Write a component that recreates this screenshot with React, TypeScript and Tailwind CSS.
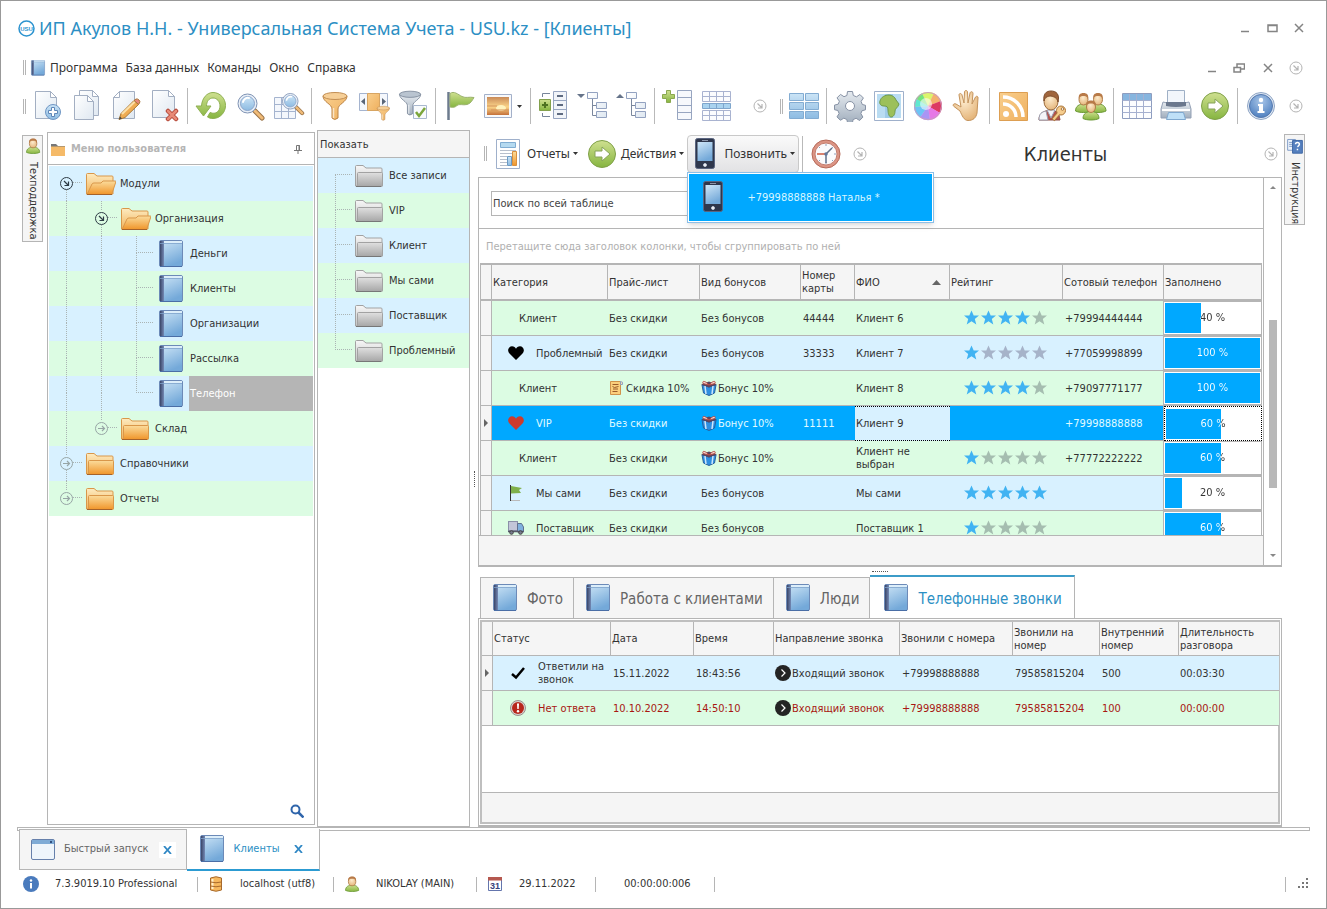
import React from 'react';

type IconProps = { size?: number };

/* Gradients shared by all icons */
const IconDefs: React.FC = () => (
    <svg width="0" height="0" className="absolute" aria-hidden="true">
        <defs>
            <linearGradient id="gPage" x1="0" y1="0" x2="1" y2="1">
                <stop offset="0" stopColor="#ffffff" />
                <stop offset="1" stopColor="#dfe8f1" />
            </linearGradient>
            <linearGradient id="gBook" x1="0" y1="0" x2="0.4" y2="1">
                <stop offset="0" stopColor="#cfe6f7" />
                <stop offset="1" stopColor="#74a9d9" />
            </linearGradient>
            <linearGradient id="gSpine" x1="0" y1="0" x2="1" y2="0">
                <stop offset="0" stopColor="#3a4568" />
                <stop offset="1" stopColor="#7489b4" />
            </linearGradient>
            <linearGradient id="gGreen" x1="0" y1="0" x2="0" y2="1">
                <stop offset="0" stopColor="#cfe090" />
                <stop offset="1" stopColor="#86b540" />
            </linearGradient>
            <linearGradient id="gOrange" x1="0" y1="0" x2="0" y2="1">
                <stop offset="0" stopColor="#fbdc9c" />
                <stop offset="1" stopColor="#f0952a" />
            </linearGradient>
            <linearGradient id="gAmber" x1="0" y1="0" x2="1" y2="1">
                <stop offset="0" stopColor="#f9cf8e" />
                <stop offset="1" stopColor="#efb05e" />
            </linearGradient>
            <linearGradient id="gOrangeBack" x1="0" y1="0" x2="0" y2="1">
                <stop offset="0" stopColor="#fdebc0" />
                <stop offset="1" stopColor="#f2b45c" />
            </linearGradient>
            <linearGradient id="gGray" x1="0" y1="0" x2="0" y2="1">
                <stop offset="0" stopColor="#e0e0e0" />
                <stop offset="1" stopColor="#a6a6a6" />
            </linearGradient>
            <linearGradient id="gGrayBack" x1="0" y1="0" x2="0" y2="1">
                <stop offset="0" stopColor="#f7f7f7" />
                <stop offset="1" stopColor="#c4c4c4" />
            </linearGradient>
            <linearGradient id="gBlue" x1="0" y1="0" x2="0" y2="1">
                <stop offset="0" stopColor="#cbe4f6" />
                <stop offset="1" stopColor="#8dbbe2" />
            </linearGradient>
            <linearGradient id="gSteel" x1="0" y1="0" x2="0" y2="1">
                <stop offset="0" stopColor="#e6ebf0" />
                <stop offset="1" stopColor="#a1aebd" />
            </linearGradient>
            <linearGradient id="gSunset" x1="0" y1="0" x2="0" y2="1">
                <stop offset="0" stopColor="#c98a58" />
                <stop offset="0.55" stopColor="#fbd489" />
                <stop offset="1" stopColor="#c4713a" />
            </linearGradient>
            <radialGradient id="gSkin" cx="0.45" cy="0.35" r="0.7">
                <stop offset="0" stopColor="#fdebcd" />
                <stop offset="1" stopColor="#e3b276" />
            </radialGradient>
            <radialGradient id="gBall" cx="0.5" cy="0.3" r="0.7">
                <stop offset="0" stopColor="#a9c6e8" />
                <stop offset="1" stopColor="#4f80c0" />
            </radialGradient>
        </defs>
    </svg>
);

const Svg: React.FC<{ size?: number; children: React.ReactNode }> = ({ size = 32, children }) => (
    <svg width={size} height={size} viewBox="0 0 32 32" fill="none" className="shrink-0" aria-hidden="true">
        {children}
    </svg>
);

const pageStroke = '#a3afc2';

const Magnifier = () => (
    <>
        <path d="M19 19l8 8" stroke="#9a7348" strokeWidth="5" strokeLinecap="round" />
        <path d="M20 20l7 7" stroke="#f0bb78" strokeWidth="3" strokeLinecap="round" />
        <circle cx="12.500" cy="12.500" r="9.500" fill="#e8eef6" stroke="#7f93b4" />
        <circle cx="12.500" cy="12.500" r="7" fill="url(#gBlue)" stroke="#8ba6cc" />
        <path d="M8 11a5 5 0 0 1 6-4" stroke="#fff" strokeWidth="2" strokeLinecap="round" />
    </>
);

const NewDocIcon = () => (
    <Svg>
        <path d="M3.500 1.500h15l6 6v21h-21z" fill="url(#gPage)" stroke={pageStroke} />
        <path d="M18.500 1.500v6h6z" fill="#fff" stroke={pageStroke} />
        <circle cx="21" cy="22" r="7.500" fill="url(#gBlue)" stroke="#6f96c4" />
        <path d="M19.500 17.500h3v3h3v3h-3v3h-3v-3h-3v-3h3z" fill="#fff" stroke="#5f87b8" />
    </Svg>
);

const CopyIcon = () => (
    <Svg>
        <path d="M8.500.500h13l6 6v19h-19z" fill="url(#gPage)" stroke={pageStroke} />
        <path d="M21.500.500v6h6z" fill="#fff" stroke={pageStroke} />
        <path d="M3.500 5.500h13l6 6v18h-19z" fill="url(#gPage)" stroke={pageStroke} />
        <path d="M16.500 5.500v6h6z" fill="#fff" stroke={pageStroke} />
    </Svg>
);

const EditIcon = () => (
    <Svg>
        <path d="M9.500 1.500h15v27h-21v-21z" fill="url(#gPage)" stroke={pageStroke} />
        <path d="M9.500 1.500v6h-6z" fill="#fff" stroke={pageStroke} />
        <path d="M9 29.500l2-6L24 10.500l4.500 4L15 27.500z" fill="#efac53" stroke="#a87836" />
        <path d="M12 24L25 11.500" stroke="#fce0a8" strokeWidth="2" />
        <path d="M24 10.500l2-1.500q1.500-.500 3 1t.500 3l-1 1.500z" fill="#e8877c" stroke="#a87836" />
        <path d="M9 29.500l1-3 2 2z" fill="#444" />
    </Svg>
);

const DeleteDocIcon = () => (
    <Svg>
        <path d="M3.500.500h16l6 6v21h-22z" fill="url(#gPage)" stroke={pageStroke} />
        <path d="M19.500.500v6h6z" fill="#fff" stroke={pageStroke} />
        <path d="M19 21l8 8M27 21l-8 8" stroke="#b5493a" strokeWidth="4.500" strokeLinecap="round" />
        <path d="M19 21l8 8M27 21l-8 8" stroke="#e88a77" strokeWidth="2.500" strokeLinecap="round" />
    </Svg>
);

const RefreshIcon = () => (
    <Svg>
        <path
            d="M1 16h5.500C7 8 12 2.500 18 2.500c7 0 12.500 6 12.500 13S25 28.500 18 28.500c-2 0-4-.500-5.500-1.500l2.500-4.500c6 2.500 10-1.500 10-6.500 0-4.500-3-8-7-8-4 0-6.500 3.500-6.500 8H16L8.500 26z"
            fill="url(#gGreen)"
            stroke="#8fb052"
        />
    </Svg>
);

const SearchIcon = () => <Svg><g transform="translate(1 1)"><Magnifier /></g></Svg>;

const TableSearchIcon = () => (
    <Svg>
        <path d="M1.500 7.500h21v21h-21zM1.500 14.500h21M1.500 21.500h21M8.500 7.500v21M15.500 7.500v21" fill="#f4f7fc" stroke="#a5b4cf" />
        <g transform="translate(7 1) scale(.82)"><Magnifier /></g>
    </Svg>
);

const Funnel: React.FC<{ steel?: boolean }> = ({ steel }) => (
    <>
        <path
            d="M4 6c0 6 9 8 9 13v9q2.500 3 6 0v-9c0-5 9-7 9-13z"
            fill={steel ? 'url(#gSteel)' : 'url(#gAmber)'}
            stroke={steel ? '#7e8b9c' : '#bb8347'}
        />
        <ellipse cx="16" cy="6" rx="12" ry="3.500" fill={steel ? '#b9c4d0' : '#f6cf97'} stroke={steel ? '#7e8b9c' : '#c28e54'} />
        <path d="M14.500 18v10" stroke="#fff" strokeOpacity=".6" strokeWidth="1.500" />
    </>
);

const FunnelIcon = () => <Svg><Funnel /></Svg>;

const ColumnFilterIcon = () => (
    <Svg>
        <path d="M1.500 3.500h28v17h-28z" fill="#f4f7fc" stroke="#a5b4cf" />
        <path d="M9.500 3.500h12v17h-12z" fill="url(#gAmber)" stroke="#d8a562" />
        <path d="M7 8v7l-4-3.500zM24 8v7l4-3.500z" fill="#5a6678" />
        <g transform="translate(17 15) scale(.52)"><Funnel /></g>
    </Svg>
);

const FunnelCheckIcon = () => (
    <Svg>
        <g transform="translate(-1 -1) scale(.88)"><Funnel steel /></g>
        <path d="M16.500 15.500h13v13h-13z" fill="#f8fafc" stroke="#a9b8cf" />
        <path d="M19 22l3 4 6-8" stroke="#7ba63c" strokeWidth="2.500" />
    </Svg>
);

const FlagIcon = () => (
    <Svg>
        <path d="M5.500 2v28" stroke="#6d7b8e" strokeWidth="2.500" />
        <path d="M7 3.500c4-3 8 1 12 3s7 0 12 1c-2 3-3 6-7 7s-8-1-10 1-4 2-7 1.500z" fill="url(#gGreen)" stroke="#9cb36e" />
    </Svg>
);

const PictureIcon = () => (
    <Svg>
        <path d="M2.500 4.500h27v23h-27z" fill="#f7f9fc" stroke="#a3b0c9" />
        <path d="M5 7h22v18H5z" fill="url(#gSunset)" />
        <ellipse cx="19" cy="18" rx="5" ry="3" fill="#fff2bd" />
        <path d="M5 16h10M9 20h18" stroke="#d3935a" />
    </Svg>
);

const ExpandGroupIcon = () => (
    <Svg>
        <path d="M4.500 7V3.500H12M4.500 23v3.500H12" stroke="#77859a" />
        <path d="M1.500 9.500h11v11h-11z" fill="url(#gGreen)" stroke="#83a14c" />
        <path d="M4 15h6M7 12v6" stroke="#4e7221" strokeWidth="2" />
        <path d="M15.500 1.500h13v27h-13zM15.500 10.500h13M15.500 19.500h13" fill="#f1f4f9" stroke="#97a5c0" />
        <path d="M19 6h6M19 15h6M19 24h6" stroke="#5d6a80" strokeWidth="2" />
    </Svg>
);

const TreeIcon: React.FC<{ up?: boolean }> = ({ up }) => (
    <Svg>
        <path d={up ? 'M0 8h8L4 4z' : 'M0 4h8L4 8z'} fill="#66748a" />
        <path d="M15.500 9v16.500h4M15.500 15.500h4" stroke="#7a879d" />
        <path d="M10.500 2.500h10v6h-10zM19.500 12.500h10v6h-10zM19.500 21.500h10v6h-10z" fill="url(#gPage)" stroke="#93a2c0" />
    </Svg>
);

const AddColumnIcon = () => (
    <Svg>
        <path d="M4.500.500h4v4h4v4h-4v4h-4v-4h-4v-4h4z" fill="url(#gGreen)" stroke="#8aa850" />
        <path d="M15.500.500h14v29h-14zM15.500 7.500h14M15.500 15.500h14M15.500 22.500h14" fill="#f6f8fc" stroke="#97a5c0" />
    </Svg>
);

const RowsIcon = () => (
    <Svg>
        <path d="M1.500 1.500h28v10h-28zM1.500 6.500h28M8.500 1.500v10M15.500 1.500v10M22.500 1.500v10" fill="#fbfcfe" stroke="#a9b3d0" />
        <path d="M1.500 20.500h28v10h-28zM1.500 25.500h28M8.500 20.500v10M15.500 20.500v10M22.500 20.500v10" fill="#fbfcfe" stroke="#a9b3d0" />
        <path d="M1.500 13.500h28v5h-28zM8.500 13.500v5M15.500 13.500v5M22.500 13.500v5" fill="#a9d3ef" stroke="#7fa6cc" />
    </Svg>
);

const TilesIcon = () => (
    <Svg>
        <path
            d="M1.500 3.500h14v7h-14zM17.500 3.500h13v7h-13zM1.500 12.500h14v7h-14zM17.500 12.500h13v7h-13zM1.500 21.500h14v7h-14zM17.500 21.500h13v7h-13z"
            fill="url(#gBlue)"
            stroke="#83acd2"
        />
    </Svg>
);

const GearIcon = () => (
    <Svg>
        <path
            d="M13.500 1.500h5l.8 4 3.200 1.300 3.400-2.300 3.500 3.500-2.300 3.400 1.200 3.100 3.200.8v4.500l-3.600 1-1 2.800 2 3.500-3.300 3.400-3.500-2.200-3 1.300-.8 3.700h-4.600l-.9-3.800-3-1.300-3.400 2.100L3 26.900l2.100-3.400-1.200-3-3.400-.8v-4.600l3.700-.9 1.200-3L3 7.900l3.500-3.500 3.500 2.300 2.900-1.200z"
            fill="url(#gSteel)"
            stroke="#8792a5"
            strokeLinejoin="round"
        />
        <circle cx="16" cy="16" r="4.500" fill="#fff" stroke="#8792a5" />
    </Svg>
);

const MapIcon = () => (
    <Svg>
        <path d="M1.500 1.500h29v29h-29z" fill="#fff" stroke="#9fb0cb" />
        <path d="M4 4h24v24H4z" fill="#b9dcf2" />
        <path d="M12 4h8v24h-8z" fill="#9fcbe8" />
        <path d="M7 11c1-4 5-6 9-6 3 0 6 2 7 5l3 4c-1 4-4 4-4 7 0 4-2 6-4 6s-3-4-3-7-1-4-4-4-5-2-4-5z" fill="#9cc05a" stroke="#6f9a4d" />
    </Svg>
);

const ColorWheelIcon = () => (
    <Svg>
        <circle cx="16" cy="16" r="14" fill="#f7a8dd" />
        <path d="M16 16L10 3.300A14 14 0 0 1 22 3.300z" fill="#dcf56d" />
        <path d="M16 16L22 3.300A14 14 0 0 1 29 11z" fill="#f4b26e" />
        <path d="M16 16L29 11A14 14 0 0 1 28 23z" fill="#dc3a62" />
        <path d="M16 16L28 23A14 14 0 0 1 18 30z" fill="#e678e6" />
        <path d="M16 16L18 30A14 14 0 0 1 8 27.500z" fill="#a995f4" />
        <path d="M16 16L8 27.500A14 14 0 0 1 2 17z" fill="#6cc4f6" />
        <path d="M16 16L2 17A14 14 0 0 1 4 8.500z" fill="#5fe8d0" />
        <path d="M16 16L4 8.500A14 14 0 0 1 10 3.300z" fill="#73e67d" />
        <circle cx="14" cy="14" r="6" fill="#fff" fillOpacity=".55" />
        <circle cx="16" cy="16" r="13.500" stroke="#c9a0c0" />
    </Svg>
);

const HandIcon = () => (
    <Svg>
        <path
            d="M9 21L3 16.500c-2-1.500 0-3.500 2-2.500l5 3L8 5c0-2 2.500-2 3 0l2 8 .5-11c0-2 3-2 3 0l.5 11 2-10c.5-2 3-1.500 3 .500L21 14l3.500-7c1-1.500 3-.500 2.500 1l-1 15c-1 5-4 7.500-9 7.500-4 0-6-5-8-9.500z"
            fill="url(#gSkin)"
            stroke="#c4935c"
        />
    </Svg>
);

const RssIcon = () => (
    <Svg>
        <path d="M2.500 2.500h28v28h-28z" fill="url(#gAmber)" stroke="#dd9f52" />
        <circle cx="9" cy="24" r="3" fill="#fff" />
        <path d="M6 14a13 13 0 0 1 13 13M6 7a20 20 0 0 1 20 20" stroke="#fff" strokeWidth="3.500" />
    </Svg>
);

const UserKeyIcon = () => (
    <Svg>
        <path d="M3 30c0-7 4-9 12-10 6 1 8 3 9 10z" fill="#b3504a" stroke="#8c4b42" />
        <path d="M3 30c0-7 3-8 7-9l2 9zM11 20l4 8 4-8z" fill="#f4f4f8" stroke="#9b9fb0" />
        <ellipse cx="15" cy="11.500" rx="7" ry="8.500" fill="url(#gSkin)" stroke="#9b6b3d" />
        <path d="M8 11c-1-7 2-10 7-10s9 3 7 11c-1-4-3-5-7-6-3 0-6 1-7 5z" fill="#a0653c" stroke="#7d4d2c" />
        <path d="M17 30l6-7" stroke="#a9743b" strokeWidth="4" />
        <circle cx="25" cy="20.500" r="4.500" fill="#f6cd8d" stroke="#a9743b" />
        <path d="M17.500 29.500l6-7" stroke="#f6cd8d" strokeWidth="2" />
        <circle cx="26.500" cy="19" r="1.300" fill="#fff" stroke="#a9743b" />
    </Svg>
);

const Bust: React.FC<{ x: number; y: number }> = ({ x, y }) => (
    <g transform={`translate(${x} ${y})`}>
        <path d="M0 18c0-5 4-7 8-7s8 2 8 7c-4 2-12 2-16 0z" fill="url(#gGreen)" stroke="#6d9a38" />
        <ellipse cx="8" cy="6.500" rx="4.500" ry="5.500" fill="url(#gSkin)" stroke="#b07c49" />
        <path d="M3.500 6c-1-4 1-6 4.500-6s5.500 2 4.500 6c-1-3-2.500-3-4.500-3s-4 0-4.500 3z" fill="#b87a48" />
    </g>
);

const UsersIcon = () => (
    <Svg>
        <Bust x={0.5} y={3} />
        <Bust x={15} y={3} />
        <Bust x={8} y={10.500} />
    </Svg>
);

const UserIcon: React.FC<IconProps> = ({ size = 16 }) => (
    <Svg size={size}><g transform="translate(3 1) scale(1.65 1.55)"><Bust x={0} y={0} /></g></Svg>
);

const TableIcon = () => (
    <Svg>
        <path d="M1.500 3.500h29v25h-29z" fill="#fcfdff" stroke="#8e9dbf" />
        <path d="M2 4h28v6H2z" fill="#86b5df" />
        <path d="M1.500 10.500h29M1.500 16.500h29M1.500 22.500h29M8.500 4v24M15.500 4v24M22.500 4v24" stroke="#a5b0d0" />
    </Svg>
);

const PrinterIcon = () => (
    <Svg>
        <path d="M7.500.500h17v13h-17z" fill="#f2f6fb" stroke="#9fb0c6" />
        <path d="M3 12q13 4 26 0l2 7v9H1v-9z" fill="url(#gSteel)" stroke="#93a0b5" />
        <path d="M6 12h20v4q-10 2-20 0z" fill="#6b788d" />
        <path d="M2 20h28" stroke="#fff" strokeWidth="2" />
        <path d="M8.500 22.500h15l2 7h-19z" fill="#bfe0f7" stroke="#7fa8cf" />
    </Svg>
);

const ArrowBallIcon = () => (
    <Svg>
        <circle cx="16" cy="16" r="13.500" fill="url(#gGreen)" stroke="#7fa048" />
        <path d="M9 13h7V9l8 7-8 7v-4H9z" fill="#fff" stroke="#87a35b" />
    </Svg>
);

const InfoIcon = () => (
    <Svg>
        <circle cx="16" cy="16" r="13.500" fill="#dfe8f3" stroke="#8fa5c5" />
        <circle cx="16" cy="16" r="11.500" fill="url(#gBall)" stroke="#5478ae" />
        <circle cx="16" cy="10" r="2.200" fill="#fff" />
        <path d="M13 14h5v7h1.500v2h-7v-2H14v-5h-1z" fill="#fff" />
    </Svg>
);

const ReportIcon = () => (
    <Svg>
        <path d="M4.500 1.500h23v29h-23z" fill="#fff" stroke="#9fb0cb" />
        <path d="M8.500 4.500h15v5h-15z" fill="#b5daf0" stroke="#80add2" />
        <path d="M8 12.500h16M8 15.500h16M8 18.500h7M8 21.500h7M8 24.500h7M8 27.500h7" stroke="#b7bfcc" />
        <path d="M15.500 18.500h4v9h-4z" fill="url(#gBlue)" stroke="#6b9ac4" />
        <path d="M20.500 13.500h4v14h-4z" fill="url(#gOrange)" stroke="#d8903f" />
    </Svg>
);

const PhoneIcon = () => (
    <Svg>
        <rect x="6.500" y=".5" width="19" height="30" rx="2" fill="#2f374c" stroke="#5a6580" />
        <path d="M8.500 4h15v19h-15z" fill="url(#gBook)" />
        <path d="M13 2.500h6" stroke="#8b94a8" />
        <circle cx="16" cy="27" r="1.500" fill="#fff" stroke="#bfc7d5" />
    </Svg>
);

const ClockIcon = () => (
    <Svg>
        <circle cx="16" cy="16" r="14" fill="#dc9484" stroke="#b56a5a" />
        <circle cx="16" cy="16" r="11" fill="#fbfbfd" stroke="#c27d6f" />
        <path d="M16 6v2M16 24v2M26 16h-2M23 9l-1 1M9 9l1 1M9 23l1-1M23 23l-1-1" stroke="#8fa0bb" />
        <path d="M16 16l6-6M16 16v9" stroke="#5f7089" strokeWidth="1.500" />
        <path d="M16 16H7" stroke="#cc5a3e" strokeWidth="1.500" />
        <circle cx="16" cy="16" r="1.800" fill="#62789b" />
    </Svg>
);

const BookIcon: React.FC<IconProps> = ({ size = 28 }) => (
    <svg width={size} height={size} viewBox="0 0 28 28" fill="none" className="shrink-0" aria-hidden="true">
        <rect x="2.500" y=".5" width="23" height="26" rx="1.500" fill="url(#gBook)" stroke="#6c8ab8" />
        <path d="M7 1h18v2H7z" fill="#dceefa" />
        <path d="M3 1h4v25H3z" fill="url(#gSpine)" />
        <path d="M3 3.500h22" stroke="#7fa3cc" strokeWidth=".8" />
        <path d="M3 26.500h22" stroke="#4a6ea6" />
    </svg>
);

const FolderIcon: React.FC<{ kind: 'open' | 'closed' | 'gray' }> = ({ kind }) => {
    const gray = kind === 'gray';
    const stroke = gray ? '#a2a2a2' : '#d9974a';
    return (
        <svg width="30" height="24" viewBox="0 0 30 24" fill="none" className="shrink-0" aria-hidden="true">
            <path
                d="M.500 22V2.500Q.500 1.500 1.500 1.500H8l3 2.500h15q1 0 1 1v17z"
                fill={gray ? 'url(#gGrayBack)' : 'url(#gOrangeBack)'}
                stroke={stroke}
            />
            {kind === 'open' ? (
                <path d="M1 22.500L6 12q.500-1 2-1h7l2-2h12.500q.500 0 .300 1L26 21.500q-.500 1-1.500 1z" fill="url(#gOrange)" stroke={stroke} />
            ) : (
                <rect x="2.500" y="8.500" width="25" height="14" rx="1" fill={gray ? 'url(#gGray)' : 'url(#gOrange)'} stroke={stroke} />
            )}
            <path d="M1 22.500h25" stroke={gray ? '#777' : '#a5622a'} />
        </svg>
    );
};

const CircleArrow: React.FC = () => (
    <svg width="14" height="14" viewBox="0 0 14 14" fill="none" className="shrink-0" aria-hidden="true">
        <circle cx="7" cy="7" r="6" stroke="#b4b4b4" />
        <path d="M4.500 4.500L9 9M9 5v4H5" stroke="#b4b4b4" strokeWidth="1.200" />
    </svg>
);

const Caret = () => (
    <svg width="5" height="3" viewBox="0 0 5 3" className="shrink-0" aria-hidden="true">
        <path d="M0 0h5L2.500 3z" fill="#333" />
    </svg>
);

const Star: React.FC<{ on: boolean; off: string }> = ({ on, off }) => (
    <svg width="17" height="16" viewBox="0 0 17 16" aria-hidden="true">
        <path d="M8.500.500l2.200 5h5.300l-4.200 3.500 1.500 5.500-4.800-3.200-4.800 3.200L5.200 9 1 5.500h5.300z" fill={on ? '#41b3f2' : off} />
    </svg>
);

const HeartIcon: React.FC<{ color: string }> = ({ color }) => (
    <svg width="16" height="14" viewBox="0 0 16 14" aria-hidden="true">
        <path d="M8 14L1.500 7.500C-1.500 4 1 .300 4 .300c2 0 3.300 1 4 2.400C8.700 1.300 10 .300 12 .300c3 0 5.500 3.700 2.500 7.200z" fill={color} />
    </svg>
);

const SmallFlagIcon = () => (
    <svg width="16" height="16" viewBox="0 0 16 16" aria-hidden="true">
        <path d="M2.500 0v16" stroke="#333" />
        <path d="M3 1l11 2-3 2 2 3-10 .500z" fill="#7fb04b" />
        <path d="M3 15.500h9" stroke="#bbb" />
    </svg>
);

const TruckIcon = () => (
    <svg width="16" height="14" viewBox="0 0 16 14" fill="none" aria-hidden="true">
        <rect x=".500" y=".500" width="9" height="9" fill="#c2c5d8" stroke="#8a8fa8" />
        <path d="M9.500 2.500h4l2 3.500v5h-6z" fill="#7fb0de" stroke="#60708f" />
        <path d="M0 10.500h15.500" stroke="#55596b" strokeWidth="1.500" />
        <circle cx="3.500" cy="11.500" r="1.800" fill="#777c90" stroke="#444" />
        <circle cx="12.500" cy="11.500" r="1.800" fill="#777c90" stroke="#444" />
    </svg>
);

const ScrollIcon = () => (
    <svg width="15" height="16" viewBox="0 0 15 16" fill="none" className="shrink-0" aria-hidden="true">
        <path d="M1.500 1.500h10v13h-10z" fill="#fbcf7c" stroke="#d0924a" />
        <path d="M11.500 1.500q3 0 2 3h-2z" fill="#fbe3b0" stroke="#8fa3c4" />
        <path d="M3.500 4.500h6M3.500 6.500l2 1 4-1M4 9h5M3.500 11.500h5" stroke="#9a5a28" />
    </svg>
);

const GiftIcon = () => (
    <svg width="16" height="16" viewBox="0 0 16 16" fill="none" className="shrink-0" aria-hidden="true">
        <path d="M1 5l7 2 7-2-1.500 8-5.500 2.500L2.500 13z" fill="#2f8fe0" stroke="#2a5f9c" />
        <path d="M0 4.500L8 1.500l8 3L8 7.500z" fill="#5b4560" />
        <path d="M4 6l1 8M12 6l-1 8" stroke="#cfe6fb" strokeWidth="1.500" />
        <path d="M8 5C4 .500 1 .500 2 3.500L8 5zM8 5c4-4.500 7-4.500 6-1.500L8 5z" fill="#f3d9d4" stroke="#b84a42" />
    </svg>
);

const CheckIcon = () => (
    <svg width="16" height="16" viewBox="0 0 16 16" fill="none" aria-hidden="true">
        <path d="M2 9l4 3.500L14 3" stroke="#000" strokeWidth="2.500" />
    </svg>
);

const AlertIcon = () => (
    <svg width="16" height="16" viewBox="0 0 16 16" aria-hidden="true">
        <circle cx="8" cy="8" r="7.500" fill="#d8d2cf" stroke="#9a8f8c" />
        <circle cx="8" cy="8" r="6" fill="#b8261c" />
        <path d="M7 3.500h2l-.3 5.500H7.300z" fill="#fff" />
        <circle cx="8" cy="11.300" r="1.200" fill="#fff" />
    </svg>
);

const CallIcon = () => (
    <svg width="16" height="16" viewBox="0 0 16 16" fill="none" className="shrink-0" aria-hidden="true">
        <circle cx="8" cy="8" r="8" fill="#242424" />
        <path d="M6.500 4.500L10 8l-3.500 3.500" stroke="#fff" strokeWidth="1.200" />
    </svg>
);

const DatabaseIcon = () => (
    <svg width="16" height="16" viewBox="0 0 16 16" fill="none" aria-hidden="true">
        <path d="M2.500 2q5.500-2.500 11 0v12q-5.500 2.500-11 0z" fill="#f6b85e" stroke="#a86a2c" />
        <path d="M4.500 3v10" stroke="#fff0cf" strokeWidth="2" />
        <path d="M2.500 6q5.500 1.500 11 0M2.500 10q5.500 1.500 11 0" stroke="#a86a2c" />
    </svg>
);

const DayIcon = () => (
    <svg width="16" height="16" viewBox="0 0 16 16" aria-hidden="true">
        <path d="M1.500 1.500h13v13h-13z" fill="#fff" stroke="#6475ad" />
        <path d="M1 1h14v3.500H1z" fill="#b5584f" />
        <text x="8" y="13" textAnchor="middle" fontSize="9" fontWeight="700" fontFamily="Liberation Sans, sans-serif" fill="#38437a">31</text>
    </svg>
);

const SmallInfoIcon = () => (
    <svg width="16" height="16" viewBox="0 0 16 16" aria-hidden="true">
        <circle cx="8" cy="8" r="8" fill="#4a7bbd" />
        <circle cx="8" cy="4.500" r="1.200" fill="#fff" />
        <path d="M7 7h2v5.500H7z" fill="#fff" />
    </svg>
);

const HelpBookIcon = () => (
    <svg width="16" height="16" viewBox="0 0 16 16" fill="none" aria-hidden="true">
        <path d="M.500 1.500h8v11h-8z" fill="#eef4fb" stroke="#7f9cc8" />
        <path d="M2 4.500h3M2 6.500h3M2 8.500h3" stroke="#7f9cc8" />
        <path d="M5.500 2.500h10v13h-10z" fill="#5580bf" stroke="#3f68a5" />
        <path d="M8.500 6.500q0-2 2-2t2 2q0 1-2 2.500M10.500 11v1.500" stroke="#fff" strokeWidth="1.500" />
    </svg>
);

const WindowIcon = () => (
    <svg width="26" height="24" viewBox="0 0 26 24" className="shrink-0" aria-hidden="true">
        <rect x="1.500" y="1.500" width="23" height="20" rx="1.500" fill="#eef5fb" stroke="#6680ab" />
        <path d="M2 2h22v4H2z" fill="#7eabd6" />
        <path d="M20 3h2v2h-2z" fill="#33507f" />
    </svg>
);

const LogoIcon = () => (
    <svg width="17" height="17" viewBox="0 0 17 17" fill="none" className="shrink-0" aria-hidden="true">
        <circle cx="8.500" cy="8.500" r="7.500" stroke="#2c93cf" strokeWidth="1.500" />
        <text x="8.500" y="10.500" textAnchor="middle" fontSize="6" fontWeight="700" fontFamily="Liberation Sans, sans-serif" fill="#2c93cf">USU</text>
    </svg>
);

const CloseMark = () => (
    <svg width="9" height="8" viewBox="0 0 9 8" fill="none" aria-hidden="true">
        <path d="M1 0l7 8M8 0L1 8" stroke="#2f87c4" strokeWidth="1.800" />
    </svg>
);

const Grip = () => <span className="h-[15px] w-[3px] shrink-0 border-x border-[#b5b5b5]" />;
const Divider = () => <span className="mx-[3px] h-9 w-px shrink-0 bg-[#b9b9b9]" />;

const ToolButton: React.FC<{ label: string; children: React.ReactNode }> = ({ label, children }) => (
    <button type="button" aria-label={label} className="flex w-[39px] shrink-0 items-center justify-center">
        {children}
    </button>
);

const WindowButton: React.FC<{ label: string; d: string }> = ({ label, d }) => (
    <button type="button" aria-label={label} className="flex w-[27px] justify-center">
        <svg width="12" height="12" viewBox="0 0 12 12" fill="none" aria-hidden="true">
            <path d={d} stroke="#848484" strokeWidth="1.500" />
        </svg>
    </button>
);

/* Tree rows. Guide letters: t = line above, b = line below, r = line to the right */
type TreeRow = {
    label: string;
    guides: string[];
    toggle?: 'open' | 'closed';
    icon: 'open' | 'closed' | 'gray' | 'book';
    selected?: boolean;
};

const menuRows: TreeRow[] = [
    { label: 'Модули', guides: ['br'], toggle: 'open', icon: 'open' },
    { label: 'Организация', guides: ['tb', 'tbr'], toggle: 'open', icon: 'open' },
    { label: 'Деньги', guides: ['tb', 'tb', 'tbr'], icon: 'book' },
    { label: 'Клиенты', guides: ['tb', 'tb', 'tbr'], icon: 'book' },
    { label: 'Организации', guides: ['tb', 'tb', 'tbr'], icon: 'book' },
    { label: 'Рассылка', guides: ['tb', 'tb', 'tbr'], icon: 'book' },
    { label: 'Телефон', guides: ['tb', 'tb', 'tr'], icon: 'book', selected: true },
    { label: 'Склад', guides: ['tb', 'tr'], toggle: 'closed', icon: 'closed' },
    { label: 'Справочники', guides: ['tbr'], toggle: 'closed', icon: 'closed' },
    { label: 'Отчеты', guides: ['tr'], toggle: 'closed', icon: 'closed' },
];

const showRows: TreeRow[] = [
    { label: 'Все записи', guides: ['br'], icon: 'gray' },
    { label: 'VIP', guides: ['tbr'], icon: 'gray' },
    { label: 'Клиент', guides: ['tbr'], icon: 'gray' },
    { label: 'Мы сами', guides: ['tbr'], icon: 'gray' },
    { label: 'Поставщик', guides: ['tbr'], icon: 'gray' },
    { label: 'Проблемный', guides: ['tr'], icon: 'gray' },
];

const TreeGuide: React.FC<{ lines: string; toggle?: 'open' | 'closed' }> = ({ lines, toggle }) => {
    const gap = toggle ? 7 : 0;
    return (
        <svg width="35" height="35" viewBox="0 0 35 35" fill="none" className="shrink-0" aria-hidden="true">
            <g stroke="#aab4b4" strokeDasharray="1 1">
                {lines.includes('t') && <path d={`M17.500 0V${17 - gap}`} />}
                {lines.includes('b') && <path d={`M17.500 ${17 + gap}V35`} />}
                {lines.includes('r') && <path d={`M${17 + gap} 16.500H34`} />}
            </g>
            {toggle && (
                <>
                    <circle cx="17.500" cy="17.500" r="6" stroke={toggle === 'open' ? '#2d3b45' : '#97a5a5'} />
                    <path
                        d={toggle === 'open' ? 'M15 15l4.500 4.500M19.500 15.500v4h-4' : 'M14 17.500h6.500M18 15l2.500 2.500L18 20'}
                        stroke={toggle === 'open' ? '#2d3b45' : '#97a5a5'}
                        strokeWidth="1.200"
                    />
                </>
            )}
        </svg>
    );
};

const Tree: React.FC<{ rows: TreeRow[] }> = ({ rows }) => (
    <ul>
        {rows.map((row) => (
            <li key={row.label} className="flex h-[35px] odd:bg-[#d8f1ff] even:bg-[#dcfce3]">
                {row.guides.map((lines, i) => (
                    <TreeGuide key={i} lines={lines} toggle={i === row.guides.length - 1 ? row.toggle : undefined} />
                ))}
                <button type="button" className="flex min-w-0 flex-1 items-center text-left">
                    <span className={row.icon === 'book' ? 'flex w-[35px] shrink-0 pl-[3px]' : 'flex w-[35px] shrink-0 pl-0.5'}>
                        {row.icon === 'book' ? <BookIcon /> : <FolderIcon kind={row.icon} />}
                    </span>
                    <span className={row.selected ? 'flex h-full flex-1 items-center bg-[#b5b5b5] pl-px pt-0.5 text-white' : 'pl-px pt-0.5'}>
                        {row.label}
                    </span>
                </button>
            </li>
        ))}
    </ul>
);

type Client = {
    category: string;
    icon?: React.ReactNode;
    price: string;
    bonus: string;
    card?: string;
    name: string;
    rating: number;
    phone?: string;
    filled: number;
    bar: number;
    selected?: boolean;
};

const clients: Client[] = [
    { category: 'Клиент', price: 'Без скидки', bonus: 'Без бонусов', card: '44444', name: 'Клиент 6', rating: 4, phone: '+79994444444', filled: 40, bar: 38 },
    { category: 'Проблемный', icon: <HeartIcon color="#000" />, price: 'Без скидки', bonus: 'Без бонусов', card: '33333', name: 'Клиент 7', rating: 1, phone: '+77059998899', filled: 100, bar: 100 },
    { category: 'Клиент', price: 'Скидка 10%', bonus: 'Бонус 10%', name: 'Клиент 8', rating: 4, phone: '+79097771177', filled: 100, bar: 100 },
    { category: 'VIP', icon: <HeartIcon color="#cd3a2c" />, price: 'Без скидки', bonus: 'Бонус 10%', card: '11111', name: 'Клиент 9', rating: 0, phone: '+79998888888', filled: 60, bar: 59, selected: true },
    { category: 'Клиент', price: 'Без скидки', bonus: 'Бонус 10%', name: 'Клиент не выбран', rating: 1, phone: '+77772222222', filled: 60, bar: 59 },
    { category: 'Мы сами', icon: <SmallFlagIcon />, price: 'Без скидки', bonus: 'Без бонусов', name: 'Мы сами', rating: 5, filled: 20, bar: 18 },
    { category: 'Поставщик', icon: <TruckIcon />, price: 'Без скидки', bonus: 'Без бонусов', name: 'Поставщик 1', rating: 1, filled: 60, bar: 59 },
];

const clientColumns = ['Категория', 'Прайс-лист', 'Вид бонусов', 'Номер карты', 'ФИО', 'Рейтинг', 'Сотовый телефон', 'Заполнено'];

const calls = [
    { ok: true, status: 'Ответили на звонок', date: '15.11.2022', time: '18:43:56', inner: '500', length: '00:03:30' },
    { ok: false, status: 'Нет ответа', date: '10.10.2022', time: '14:50:10', inner: '100', length: '00:00:00' },
];

const callColumns = ['Статус', 'Дата', 'Время', 'Направление звонка', 'Звонили с номера', 'Звонили на номер', 'Внутренний номер', 'Длительность разговора'];

const RowMarker = () => (
    <svg width="4" height="8" viewBox="0 0 4 8" className="ml-[3px]" aria-hidden="true">
        <path d="M0 0l4 4-4 4z" fill="#666" />
    </svg>
);

const Filled: React.FC<{ client: Client }> = ({ client }) => (
    <div className="h-[32px] bg-white p-px">
        <div
            className="h-full"
            style={{ backgroundImage: `linear-gradient(to right, #00a8ff ${client.bar}%, transparent ${client.bar}%)` }}
        >
            <div
                className="bg-clip-text text-center leading-[30px] text-transparent"
                style={{ backgroundImage: `linear-gradient(to right, #ffffff ${client.bar}%, #333333 ${client.bar}%)` }}
            >
                {client.filled} %
            </div>
        </div>
    </div>
);

const ClientTable: React.FC = () => (
    <table className="w-full table-fixed border-separate border-spacing-0 border-l border-t-2 border-[#b5b5b5] leading-[13px]">
        <colgroup>
            <col className="w-[11px]" />
            <col className="w-[116px]" />
            <col className="w-[92px]" />
            <col className="w-[101px]" />
            <col className="w-[54px]" />
            <col className="w-[95px]" />
            <col className="w-[113px]" />
            <col className="w-[101px]" />
            <col className="w-[98px]" />
        </colgroup>
        <thead>
            <tr className="h-[36px] bg-[#f5f5f5] text-left">
                <th className="border-b-2 border-r border-[#b5b5b5]" />
                {clientColumns.map((name) => (
                    <th key={name} className="border-b-2 border-r border-[#b5b5b5] font-normal">
                        {name === 'ФИО' ? (
                            <span className="flex items-center justify-between pl-px pr-2">
                                {name}
                                <svg width="9" height="5" viewBox="0 0 9 5" className="shrink-0" aria-hidden="true">
                                    <path d="M0 5h9L4.500 0z" fill="#666" />
                                </svg>
                            </span>
                        ) : (
                            <span className={name === 'Номер карты' ? 'block px-px' : 'block whitespace-nowrap pl-px'}>{name}</span>
                        )}
                    </th>
                ))}
            </tr>
        </thead>
        <tbody>
            {clients.map((c, i) => (
                <tr
                    key={c.name}
                    className={
                        c.selected
                            ? 'h-[35px] bg-[#00a8ff] text-[#e0fbff]'
                            : i % 2
                              ? 'h-[35px] bg-[#d8f1ff]'
                              : 'h-[35px] bg-[#dcfce3]'
                    }
                >
                    <td className="border-b border-r border-[#b5b5b5] bg-[#f5f5f5]">{c.selected && <RowMarker />}</td>
                    <td className="border-b border-[#b5b5b5]">
                        {c.icon ? (
                            <span className="flex items-center">
                                <span className="flex w-[44px] shrink-0 justify-center pl-1">{c.icon}</span>
                                {c.category}
                            </span>
                        ) : (
                            <span className="pl-[27px]">{c.category}</span>
                        )}
                    </td>
                    <td className="whitespace-nowrap border-b border-[#b5b5b5] pl-px">
                        <span className="flex items-center gap-0.5">
                            {c.price.startsWith('Скидка') && <ScrollIcon />}
                            {c.price}
                        </span>
                    </td>
                    <td className="border-b border-[#b5b5b5] pl-px">
                        <span className="flex items-center gap-px">
                            {c.bonus.startsWith('Бонус') && <GiftIcon />}
                            {c.bonus}
                        </span>
                    </td>
                    <td className="border-b border-[#b5b5b5] pl-0.5">{c.card}</td>
                    <td
                        className={
                            c.selected
                                ? 'border-y border-dotted border-black bg-[#d8f1ff] pl-px text-[#333]'
                                : 'border-b border-[#b5b5b5] pl-px pr-6'
                        }
                    >
                        {c.name}
                    </td>
                    <td className="border-b border-[#b5b5b5] pl-[13px]">
                        {!c.selected && (
                            <span className="flex">
                                {[1, 2, 3, 4, 5].map((n) => (
                                    <Star key={n} on={n <= c.rating} off={i % 2 ? '#a6b3c9' : '#a5bdb0'} />
                                ))}
                            </span>
                        )}
                    </td>
                    <td className="border-b border-r border-[#b5b5b5] pl-0.5">{c.phone}</td>
                    <td
                        className={
                            c.selected
                                ? 'border border-dotted border-black bg-white p-0'
                                : 'border-b-2 border-r border-t border-[#b5b5b5] bg-white p-0'
                        }
                    >
                        <Filled client={c} />
                    </td>
                </tr>
            ))}
        </tbody>
    </table>
);

const CallTable: React.FC = () => (
    <table className="w-full table-fixed border-separate border-spacing-0 leading-[13px]">
        <colgroup>
            <col className="w-[11px]" />
            <col className="w-[118px]" />
            <col className="w-[83px]" />
            <col className="w-[80px]" />
            <col className="w-[126px]" />
            <col className="w-[113px]" />
            <col className="w-[87px]" />
            <col className="w-[79px]" />
            <col className="w-[100px]" />
        </colgroup>
        <thead>
            <tr className="h-[34px] bg-[#f5f5f5] text-left">
                <th className="border-b border-r border-[#b5b5b5]" />
                {callColumns.map((name) => (
                    <th key={name} className="border-b border-r border-[#b5b5b5] pl-px font-normal last:border-r-0">
                        {name}
                    </th>
                ))}
            </tr>
        </thead>
        <tbody>
            {calls.map((c) => (
                <tr key={c.date} className={c.ok ? 'h-[35px] bg-[#d8f1ff]' : 'h-[35px] bg-[#dcfce3] text-[#a81712]'}>
                    <td className="border-b border-r border-[#b5b5b5] bg-[#f5f5f5]">{c.ok && <RowMarker />}</td>
                    <td className="border-b border-[#b5b5b5]">
                        <span className="flex items-center">
                            <span className="flex w-[45px] shrink-0 justify-center pl-1">{c.ok ? <CheckIcon /> : <AlertIcon />}</span>
                            {c.status}
                        </span>
                    </td>
                    <td className="border-b border-[#b5b5b5] pl-0.5">{c.date}</td>
                    <td className="border-b border-[#b5b5b5] pl-0.5">{c.time}</td>
                    <td className="border-b border-[#b5b5b5] pl-px">
                        <span className="flex items-center gap-px whitespace-nowrap">
                            <CallIcon />
                            Входящий звонок
                        </span>
                    </td>
                    <td className="border-b border-[#b5b5b5] pl-0.5">+79998888888</td>
                    <td className="border-b border-[#b5b5b5] pl-0.5">79585815204</td>
                    <td className="border-b border-[#b5b5b5] pl-0.5">{c.inner}</td>
                    <td className="border-b border-[#b5b5b5] pl-px">{c.length}</td>
                </tr>
            ))}
        </tbody>
    </table>
);

const StatusItem: React.FC<{ icon?: React.ReactNode; className: string; children: React.ReactNode }> = ({ icon, className, children }) => (
    <div className={`flex h-[15px] items-center gap-4 border-r border-[#b5b5b5] ${className}`}>
        {icon}
        <span>{children}</span>
    </div>
);

const App: React.FC = () => {
    return (
        <div className="flex min-h-screen flex-col border border-[#999] bg-white pb-[13px] font-['DejaVu_Sans_Condensed','Noto_Sans',sans-serif] text-[11px] text-[#333]">
            <IconDefs />

            {/* Title bar */}
            <header className="flex h-[54px] items-center pl-[17px] pr-[14px]">
                <LogoIcon />
                <h1 className="flex-1 pl-1 font-['Noto_Sans',sans-serif] text-[18px] text-[#2c8fc4]">
                    ИП Акулов Н.Н. - Универсальная Система Учета - USU.kz - [Клиенты]
                </h1>
                <WindowButton label="Свернуть" d="M2 9.500h8" />
                <WindowButton label="Развернуть" d="M2 3h9v6.500H2zM2 3.500h9" />
                <WindowButton label="Закрыть" d="M2 2l8 8M10 2l-8 8" />
            </header>

            {/* Main menu */}
            <nav className="flex h-[25px] items-center pl-[22px] pr-[23px]">
                <Grip />
                <span className="mx-1">
                    <BookIcon size={16} />
                </span>
                <div className="flex flex-1 gap-2 font-['Noto_Sans',sans-serif] text-[12px]">
                    {['Программа', 'База данных', 'Команды', 'Окно', 'Справка'].map((item) => (
                        <button key={item} type="button">{item}</button>
                    ))}
                </div>
                <WindowButton label="Свернуть окно" d="M2 9.500h8" />
                <WindowButton label="Восстановить окно" d="M1 5.500h6.500v4.500H1zM4 5V2h7.500v5H8" />
                <span className="ml-0.5 mr-2">
                    <WindowButton label="Закрыть окно" d="M2 2l8 8M10 2l-8 8" />
                </span>
                <CircleArrow />
            </nav>

            {/* Icon toolbar */}
            <div className="flex h-[50px] items-center pl-[22px] pr-[23px] pt-0.5">
                <Grip />
                <span className="w-0.5" />
                <ToolButton label="Добавить"><NewDocIcon /></ToolButton>
                <ToolButton label="Копировать"><CopyIcon /></ToolButton>
                <ToolButton label="Изменить"><EditIcon /></ToolButton>
                <ToolButton label="Удалить"><DeleteDocIcon /></ToolButton>
                <Divider />
                <ToolButton label="Обновить"><RefreshIcon /></ToolButton>
                <ToolButton label="Найти"><SearchIcon /></ToolButton>
                <ToolButton label="Поиск по таблице"><TableSearchIcon /></ToolButton>
                <Divider />
                <ToolButton label="Фильтр"><FunnelIcon /></ToolButton>
                <ToolButton label="Фильтр по колонке"><ColumnFilterIcon /></ToolButton>
                <ToolButton label="Применить фильтр"><FunnelCheckIcon /></ToolButton>
                <Divider />
                <ToolButton label="Отметить"><FlagIcon /></ToolButton>
                <ToolButton label="Изображение"><PictureIcon /></ToolButton>
                <button type="button" aria-label="Варианты" className="flex w-2.5"><Caret /></button>
                <Divider />
                <ToolButton label="Группы"><ExpandGroupIcon /></ToolButton>
                <ToolButton label="Развернуть группы"><TreeIcon /></ToolButton>
                <ToolButton label="Свернуть группы"><TreeIcon up /></ToolButton>
                <Divider />
                <ToolButton label="Добавить колонку"><AddColumnIcon /></ToolButton>
                <ToolButton label="Строки"><RowsIcon /></ToolButton>
                <button type="button" aria-label="Ещё" className="ml-[17px] mr-[13px]"><CircleArrow /></button>
                <Grip />
                <span className="w-px" />
                <ToolButton label="Плитка"><TilesIcon /></ToolButton>
                <Divider />
                <ToolButton label="Настройки"><GearIcon /></ToolButton>
                <ToolButton label="Карта"><MapIcon /></ToolButton>
                <ToolButton label="Цвета"><ColorWheelIcon /></ToolButton>
                <ToolButton label="Стоп"><HandIcon /></ToolButton>
                <Divider />
                <ToolButton label="Рассылка"><RssIcon /></ToolButton>
                <ToolButton label="Права доступа"><UserKeyIcon /></ToolButton>
                <ToolButton label="Пользователи"><UsersIcon /></ToolButton>
                <Divider />
                <ToolButton label="Таблица"><TableIcon /></ToolButton>
                <ToolButton label="Печать"><PrinterIcon /></ToolButton>
                <ToolButton label="Перейти"><ArrowBallIcon /></ToolButton>
                <Divider />
                <ToolButton label="Справка"><InfoIcon /></ToolButton>
                <button type="button" aria-label="Ещё кнопки" className="ml-auto"><CircleArrow /></button>
            </div>

            <main className="flex flex-1 items-stretch pl-[21px] pr-[21px]">
                <button
                    type="button"
                    className="mt-[5px] flex h-[107px] w-[21px] shrink-0 flex-col items-center gap-2 border border-[#b5b5b5] bg-[#f5f5f5] pt-0.5"
                >
                    <UserIcon />
                    <span className="[writing-mode:vertical-rl]">Техподдержка</span>
                </button>

                {/* User menu */}
                <section className="mb-0.5 ml-1 mt-0.5 flex w-[268px] shrink-0 flex-col border border-[#b5b5b5]">
                    <div className="flex h-8 items-center gap-1.5 border-b border-[#b5b5b5] pl-[3px] pr-3 pt-0.5">
                        <svg width="14" height="12" viewBox="0 0 14 12" aria-hidden="true">
                            <path d="M0 0h5l2 2h7v2H0z" fill="#777" />
                            <path d="M0 2.500h14V12H0z" fill="#f5ba68" />
                        </svg>
                        <h2 className="flex-1 font-bold text-[#b5b5b5]">Меню пользователя</h2>
                        <button type="button" aria-label="Закрепить">
                            <svg width="8" height="9" viewBox="0 0 8 9" fill="none" aria-hidden="true">
                                <path d="M2.500.500h3v5h-3zM5 0v6M0 5.500h8M4 6v3" stroke="#777" />
                            </svg>
                        </button>
                    </div>
                    <div className="flex-1 p-px">
                        <Tree rows={menuRows} />
                    </div>
                    <button type="button" aria-label="Поиск в меню" className="mb-1.5 mr-2.5 self-end">
                        <svg width="14" height="14" viewBox="0 0 14 14" fill="none" aria-hidden="true">
                            <circle cx="5.500" cy="5.500" r="4" stroke="#2f65ab" strokeWidth="2" />
                            <path d="M8.500 8.500l5 5" stroke="#2f65ab" strokeWidth="2.500" />
                        </svg>
                    </button>
                </section>

                {/* Quick filter */}
                <section className="ml-0.5 w-[153px] shrink-0 border border-[#b5b5b5]">
                    <h2 className="flex h-[27px] items-center border-b border-[#b5b5b5] bg-[#f5f5f5] pl-0.5 pt-0.5">Показать</h2>
                    <Tree rows={showRows} />
                </section>

                <div className="flex w-2 shrink-0 items-center justify-center">
                    <span className="h-4 border-l border-dotted border-[#555]" />
                </div>

                <section className="mr-0.5 flex min-w-0 flex-1 flex-col">
                    {/* Client toolbar */}
                    <div className="flex h-[47px] items-center pl-1.5 pr-1">
                        <Grip />
                        <button type="button" className="ml-[5px] flex items-center gap-[3px] font-['Noto_Sans',sans-serif] text-[12px]">
                            <ReportIcon />
                            Отчеты
                            <Caret />
                        </button>
                        <button type="button" className="ml-2 flex items-center gap-[3px] font-['Noto_Sans',sans-serif] text-[12px]">
                            <ArrowBallIcon />
                            Действия
                            <Caret />
                        </button>
                        <div className="relative ml-[3px]">
                            <button
                                type="button"
                                className="flex h-[38px] items-center gap-[3px] rounded-sm border border-[#c9c9c9] bg-linear-to-b from-[#fafafa] to-[#e2e2e4] pl-px pr-[3px] font-['Noto_Sans',sans-serif] text-[12px]"
                            >
                                <PhoneIcon />
                                Позвонить
                                <Caret />
                            </button>
                            <div className="absolute left-0 top-[37px] z-10 w-[247px] border border-[#8bbfe8] bg-white p-px shadow-md">
                                <button type="button" className="flex h-[47px] w-full items-center gap-[18px] bg-[#00a8ff] pl-2 text-[#d8f6ff]">
                                    <PhoneIcon />
                                    <span className="pt-0.5">+79998888888 Наталья *</span>
                                </button>
                            </div>
                        </div>
                        <Divider />
                        <ToolButton label="История"><ClockIcon /></ToolButton>
                        <button type="button" aria-label="Ещё действия" className="ml-2"><CircleArrow /></button>
                        <h2 className="flex-1 text-center text-[20px]">Клиенты</h2>
                        <button type="button" aria-label="Ещё вкладки"><CircleArrow /></button>
                    </div>

                    <div className="flex border border-b-2 border-[#b5b5b5]">
                        <div className="min-w-0 flex-1">
                            <div className="flex h-[51px] items-center border-b border-[#b5b5b5] pl-3">
                                <input
                                    type="text"
                                    aria-label="Поиск по всей таблице"
                                    placeholder="Поиск по всей таблице"
                                    className="h-[25px] w-60 border border-[#b5b5b5] px-px placeholder:text-[#444]"
                                />
                            </div>
                            <p className="flex h-[34px] items-center pl-[7px] pt-0.5 text-[#b0b0b0]">
                                Перетащите сюда заголовок колонки, чтобы сгруппировать по ней
                            </p>
                            <div className="mr-px max-h-[272px] overflow-hidden pl-px">
                                <ClientTable />
                            </div>
                            <div className="h-[30px] border-t border-[#b5b5b5] bg-[#f5f5f5]" />
                        </div>
                        {/* Scroll bar */}
                        <div className="flex w-[18px] shrink-0 flex-col items-center border-l border-[#b5b5b5] py-2">
                            <svg width="6" height="3" viewBox="0 0 6 3" aria-hidden="true"><path d="M0 3h6L3 0z" fill="#888" /></svg>
                            <div className="mb-[66px] mt-[131px] w-2 flex-1 bg-[#b8b8b8]" />
                            <svg width="6" height="3" viewBox="0 0 6 3" aria-hidden="true"><path d="M0 0h6L3 3z" fill="#888" /></svg>
                        </div>
                    </div>

                    <div className="flex h-2 items-center justify-center">
                        <span className="w-4 border-t border-dotted border-[#555]" />
                    </div>

                    {/* Detail tabs */}
                    <div className="flex h-[43px] items-end pl-0.5 text-[15px] text-[#666]">
                        {['Фото', 'Работа с клиентами', 'Люди'].map((tab) => (
                            <button
                                key={tab}
                                type="button"
                                className="flex h-[41px] items-center gap-2 border border-b-0 border-[#b5b5b5] bg-[#f5f5f5] px-2.5 not-first:border-l-0"
                            >
                                <BookIcon />
                                <span className="pt-0.5">{tab}</span>
                            </button>
                        ))}
                        <button type="button" className="-mb-px flex h-11 items-center gap-2 border-r border-t-2 border-r-[#b5b5b5] border-t-[#3c9cc8] bg-white px-3 text-[#2c8fc4]">
                            <BookIcon />
                            <span className="pt-0.5">Телефонные звонки</span>
                        </button>
                    </div>

                    <div className="flex flex-1 flex-col border border-b-2 border-[#b5b5b5] p-px">
                        <div className="flex flex-1 flex-col border-2 border-[#bfbfbf]">
                            <CallTable />
                            <div className="flex-1" />
                            <div className="h-[30px] border-t border-[#b5b5b5] bg-[#f5f5f5]" />
                        </div>
                    </div>
                </section>

                <button
                    type="button"
                    className="mt-1 flex h-[91px] w-[21px] shrink-0 flex-col items-center gap-2 border border-[#b5b5b5] bg-[#f5f5f5] pt-[3px]"
                >
                    <HelpBookIcon />
                    <span className="[writing-mode:vertical-rl]">Инструкция</span>
                </button>
            </main>

            <div className="mx-4 h-1 border border-[#b5b5b5]" />

            {/* Window tabs */}
            <div className="-mt-0.5 flex h-[42px] pl-[18px]">
                <div className="flex h-[41px] items-center border border-[#b5b5b5] bg-[#f5f5f5] px-2.5">
                    <button type="button" className="flex items-center gap-2 text-[#666]">
                        <WindowIcon />
                        Быстрый запуск
                    </button>
                    <button type="button" aria-label="Закрыть Быстрый запуск" className="ml-2.5 bg-white p-1">
                        <CloseMark />
                    </button>
                </div>
                <div className="flex items-center border-b-2 border-r border-b-[#2c9bd2] border-r-[#b5b5b5] bg-white pl-[11px] pr-3">
                    <button type="button" className="flex items-center gap-2 text-[#2c8fc4]">
                        <BookIcon />
                        Клиенты
                    </button>
                    <button type="button" aria-label="Закрыть Клиенты" className="ml-2.5 p-1">
                        <CloseMark />
                    </button>
                </div>
            </div>

            {/* Status bar */}
            <footer className="flex h-6 items-center pl-3 pr-4 pt-0.5">
                <StatusItem icon={<SmallInfoIcon />} className="w-[185px] pl-2.5">7.3.9019.10 Professional</StatusItem>
                <StatusItem icon={<DatabaseIcon />} className="w-[136px] pl-2.5">localhost (utf8)</StatusItem>
                <StatusItem icon={<UserIcon />} className="w-[143px] pl-2.5">NIKOLAY (MAIN)</StatusItem>
                <StatusItem icon={<DayIcon />} className="w-[119px] pl-2.5">29.11.2022</StatusItem>
                <StatusItem className="w-[119px] pl-7">00:00:00:006</StatusItem>
                <span className="ml-auto mr-3 h-[15px] w-px bg-[#b5b5b5]" />
                <svg width="12" height="12" viewBox="0 0 12 12" aria-hidden="true">
                    <path d="M8 0h2v2H8zM8 4h2v2H8zM4 4h2v2H4zM8 8h2v2H8zM4 8h2v2H4zM0 8h2v2H0z" fill="#777" />
                </svg>
            </footer>
        </div>
    );
};

export default App;
